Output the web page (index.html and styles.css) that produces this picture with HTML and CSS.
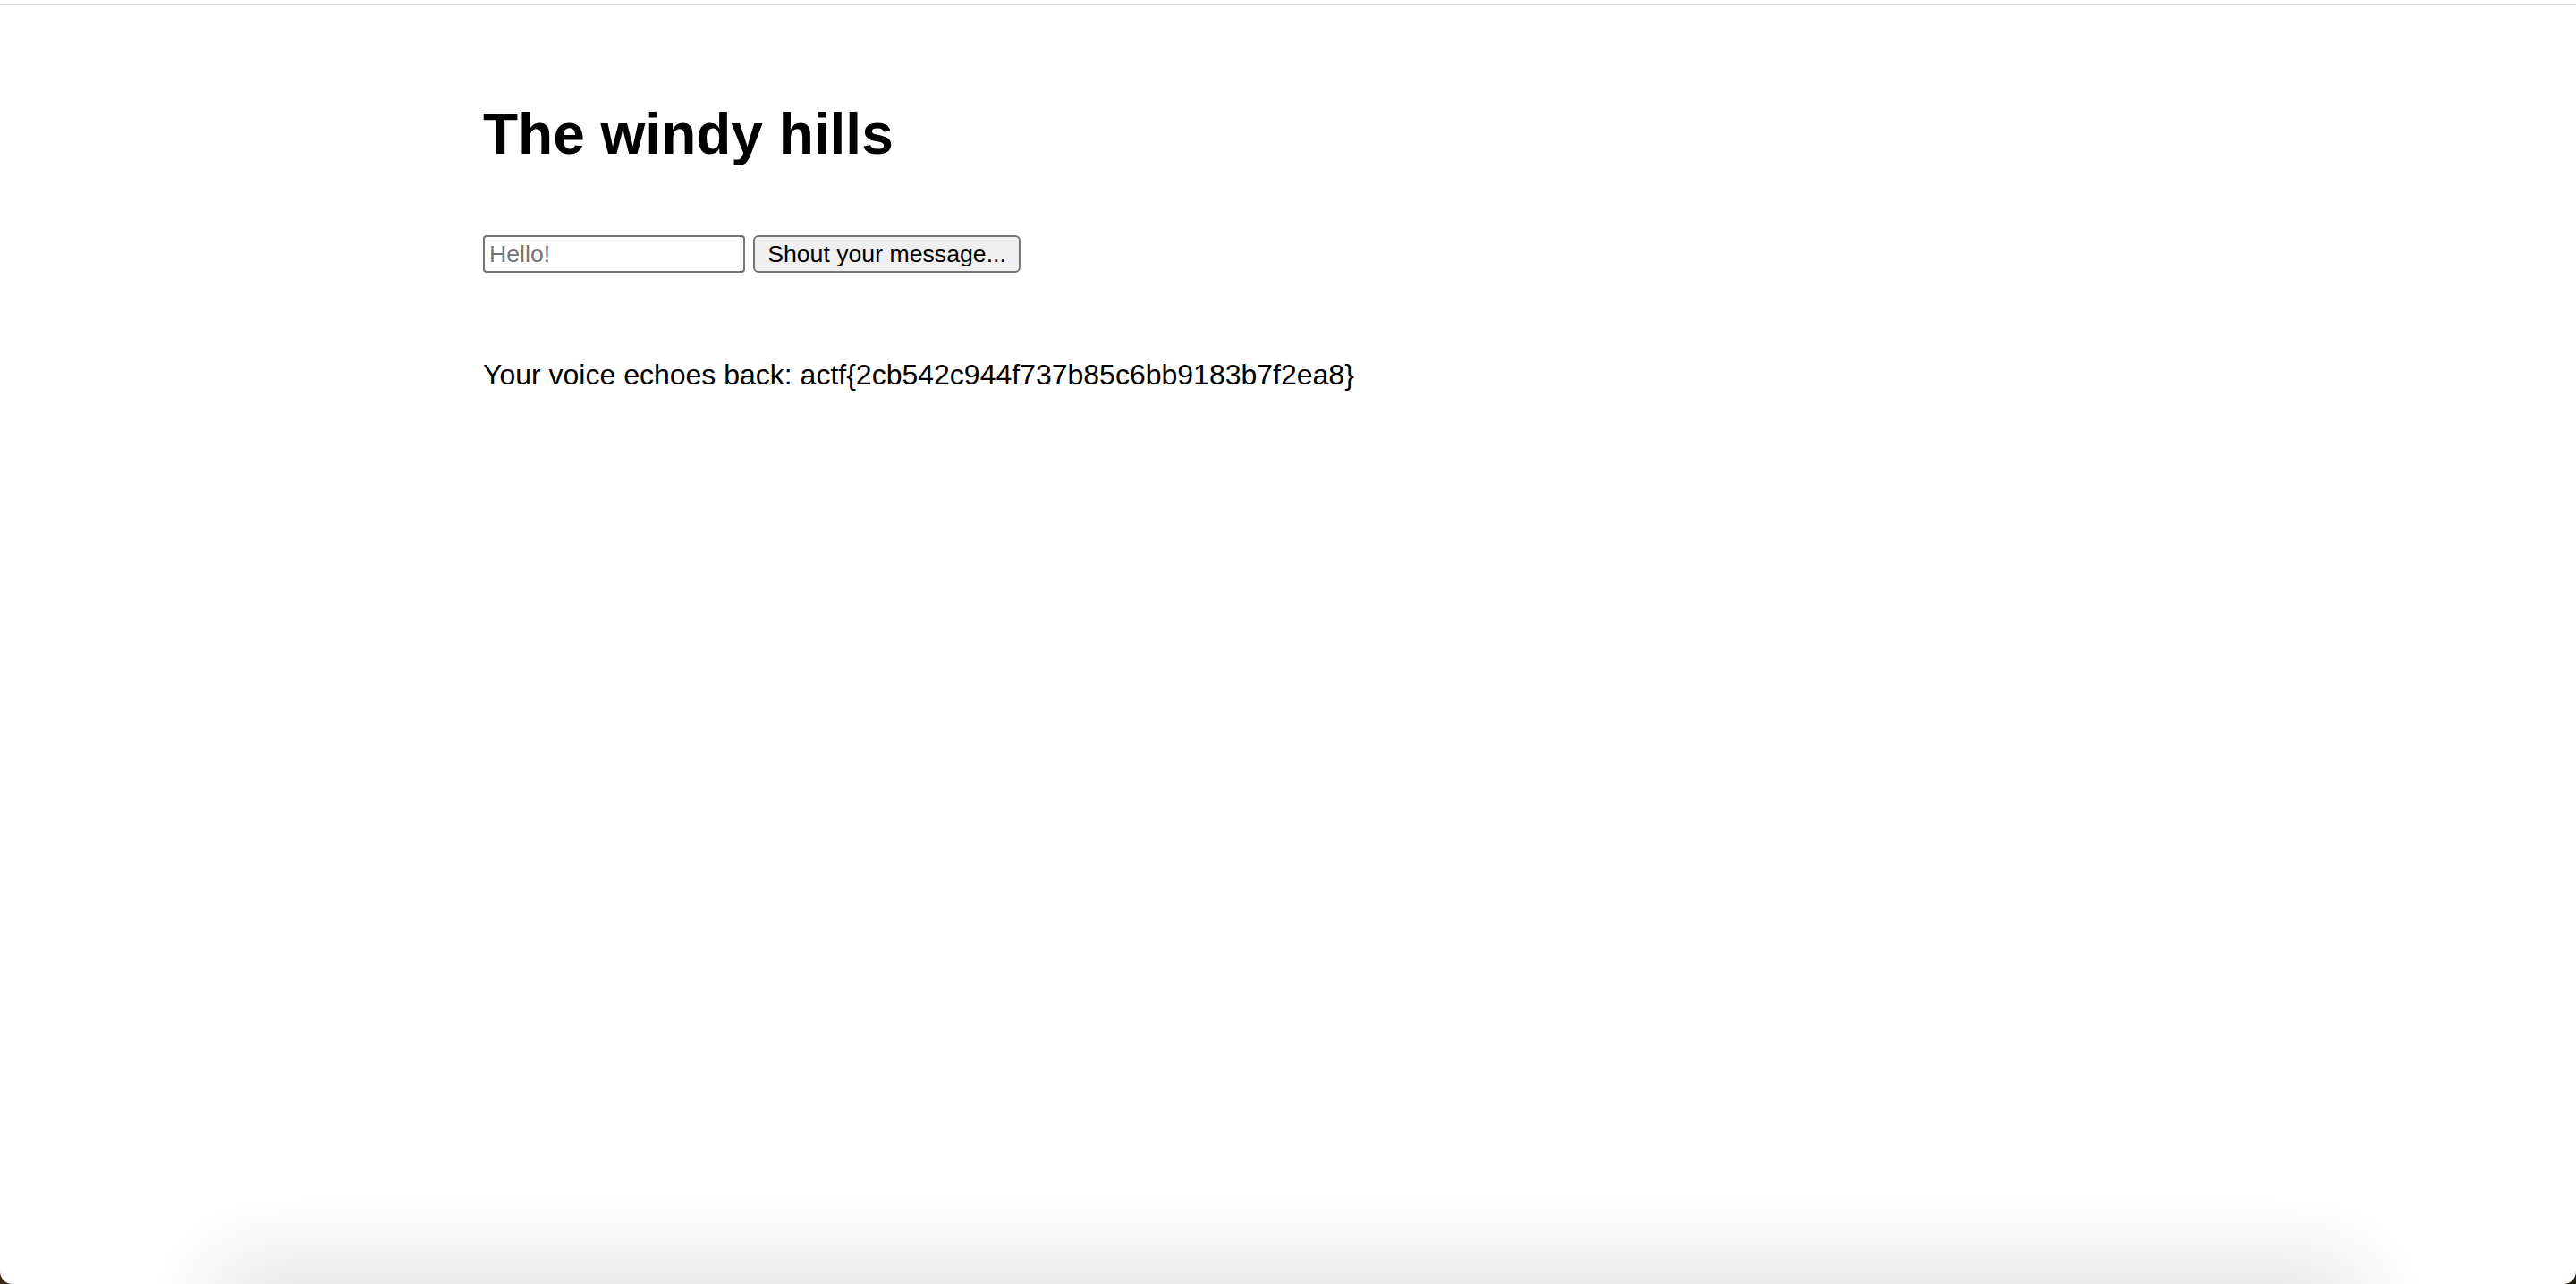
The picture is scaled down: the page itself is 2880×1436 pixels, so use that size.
FILE: index.html
```html
<!DOCTYPE html>
<html lang="en">
<head>
<meta charset="utf-8">
<title>The windy hills</title>
<link rel="stylesheet" href="styles.css">
</head>
<body>
<div class="topline"></div>
<main class="content">
  <h1 class="title">The windy hills</h1>
  <form class="shout">
    <input class="msg" type="text" placeholder="Hello!">
    <button class="btn" type="button">Shout your message...</button>
  </form>
  <p class="echo">Your voice echoes back: actf{2cb542c944f737b85c6bb9183b7f2ea8}</p>
</main>
<div class="dock-shadow"></div>
</body>
</html>
```
FILE: styles.css
```css
html {
  height: 100%;
  background: linear-gradient(to right, #3b2814, #22200f);
}
body {
  margin: 0;
  min-height: 100vh;
  background: #ffffff;
  border-radius: 0 0 14px 14px;
  position: relative;
  overflow: hidden;
  font-family: "Liberation Sans", Arial, Helvetica, sans-serif;
  color: #000;
}
.topline {
  height: 2px;
  margin-top: 4px;
  background: #dcdcdc;
}
.content {
  padding-left: 540px;
}
.title {
  font-size: 64px;
  line-height: 74px;
  font-weight: bold;
  margin: 107px 0 0;
}
.shout {
  display: flex;
  gap: 9px;
  margin-top: 76px;
}
.msg {
  box-sizing: border-box;
  width: 293px;
  height: 42px;
  font-family: "Liberation Sans", Arial, sans-serif;
  font-size: 26.67px;
  padding: 2px 5px;
  border: 2px solid #767676;
  border-radius: 4px;
  background: #fff;
  color: #000;
}
.msg::placeholder {
  color: #757575;
}
.btn {
  box-sizing: border-box;
  width: 299px;
  height: 42px;
  font-family: "Liberation Sans", Arial, sans-serif;
  font-size: 26.67px;
  padding: 0 12px;
  border: 2px solid #767676;
  border-radius: 6px;
  background: #efefef;
  color: #000;
}
.echo {
  font-size: 32px;
  margin: 96px 0 0;
}
.dock-shadow {
  position: absolute;
  left: 260px;
  right: 260px;
  bottom: -60px;
  height: 60px;
  box-shadow: 0 0 100px 16px rgba(0, 0, 0, 0.14);
  pointer-events: none;
}
```
